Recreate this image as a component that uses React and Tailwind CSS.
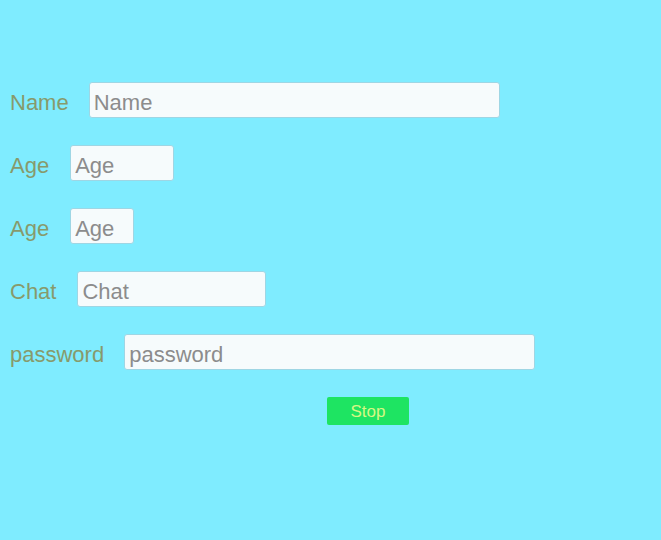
import React from "react";

const rows = [
  { label: "Name", w: "w-[411px]", g: "gap-[20px]" },
  { label: "Age", w: "w-[104px]", g: "gap-[21px]" },
  { label: "Age", w: "w-[64px]", g: "gap-[21px]" },
  { label: "Chat", w: "w-[189px]", g: "gap-[21px]" },
  { label: "password", w: "w-[411px]", g: "gap-[20px]" },
];

const font = '"Liberation Sans", Arial, sans-serif';

export default function App() {
  return (
    <div
      className="w-[661px] h-[540px] bg-[#7fecff] pt-[82px] pl-[10px] flex flex-col gap-[27px]"
      style={{ fontFamily: font }}
    >
      {rows.map((r, i) => (
        <div key={i} className={`flex items-baseline ${r.g} h-[36px]`}>
          <span className="text-[22px] leading-none text-[#879a6c]">{r.label}</span>
          <input
            placeholder={r.label}
            className={`${r.w} h-[36px] box-border rounded-[3px] border border-[#9ed6e4] bg-[#f6fbfc] pl-[4px] pt-[6px] text-[22px] text-[#8c8c8c] placeholder:text-[#8c8c8c] outline-none`}
            style={{ fontFamily: font }}
          />
        </div>
      ))}
      <div className="flex">
        <button
          className="ml-[317px] w-[82px] h-[28px] rounded-[2px] bg-[#1ee462] text-[17px] text-[#d6f884] leading-none"
          style={{ fontFamily: font }}
        >
          Stop
        </button>
      </div>
    </div>
  );
}
